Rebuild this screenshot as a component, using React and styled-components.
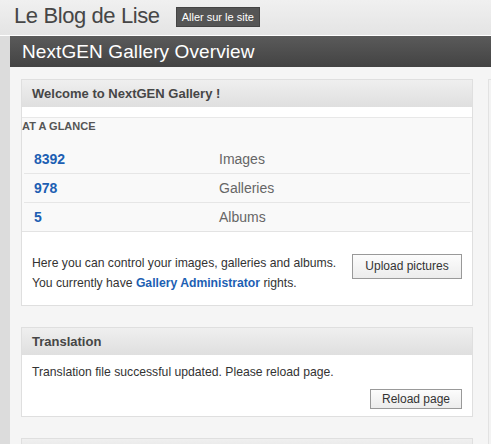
import React from "react"
import styled, { createGlobalStyle } from "styled-components"

const Global = createGlobalStyle`
  html, body {
    margin: 0;
    padding: 0;
    background: #f5f5f5;
    font-family: "Liberation Sans", Arial, sans-serif;
    color: #333;
  }
`

const Page = styled.div`
  width: 491px;
  height: 444px;
  overflow: hidden;
  display: flex;
  flex-direction: column;
`
const TopBar = styled.div`
  height: 35px;
  display: flex;
  align-items: center;
  padding-left: 14px;
  gap: 16px;
  background: linear-gradient(#f0f0f0, #e4e4e4);
  border-bottom: 1px solid #fff;
  flex-shrink: 0;
`
const SiteName = styled.div`
  font-size: 22px;
  color: #464646;
  letter-spacing: -0.4px;
  margin-top: -4px;
`
const SiteLink = styled.span`
  display: inline-block;
  background: #555;
  color: #fff;
  font-size: 11px;
  padding: 3px 5px;
  border: 1px solid #444;
  margin-top: -2px;
`
const Body = styled.div`
  flex: 1;
  display: flex;
`
const Strip = styled.div`
  width: 10px;
  background: #dcdcdc;
  flex-shrink: 0;
`
const Main = styled.div`
  flex: 1;
  display: flex;
  flex-direction: column;
`
const TitleBar = styled.div`
  height: 31px;
  display: flex;
  align-items: center;
  padding-left: 12px;
  background: linear-gradient(#5a5a5a, #434343);
  color: #fff;
  font-size: 19px;
  letter-spacing: 0.1px;
`
const Columns = styled.div`
  display: flex;
  gap: 15px;
  padding: 12px 0 0 11px;
`
const Col = styled.div`
  width: 452px;
  flex-shrink: 0;
  display: flex;
  flex-direction: column;
  gap: 21px;
`
const SideCol = styled.div`
  flex: 1;
  border: 1px solid #e2e2e2;
  border-right: none;
  background: #f3f3f3;
  height: 500px;
`
const Panel = styled.div`
  border: 1px solid #dfdfdf;
  background: #fff;
`
const PanelHead = styled.div`
  height: 27px;
  display: flex;
  align-items: center;
  padding-left: 10px;
  background: linear-gradient(#efefef, #dfdfdf);
  font-size: 13px;
  font-weight: bold;
  color: #464646;
`
const Glance = styled.div`
  margin-top: 10px;
  border-top: 1px solid #e8e8e8;
  border-bottom: 1px solid #e3e3e3;
  background: #f9f9f9;
`
const GlanceTitle = styled.div`
  font-size: 11px;
  font-weight: bold;
  color: #555;
  padding-top: 2px;
  height: 24px;
`
const StatRow = styled.div`
  display: flex;
  align-items: center;
  height: 28px;
  margin: 0 2px;
  border-top: ${({ first }) => (first ? "none" : "1px solid #e6e6e6")};
  margin-top: ${({ first }) => (first ? "1px" : "0")};
`
const Num = styled.a`
  width: 185px;
  padding-left: 10px;
  font-size: 14px;
  font-weight: bold;
  color: #1d5fb3;
`
const Label = styled.span`
  font-size: 14px;
  color: #666;
`
const Info = styled.div`
  display: flex;
  align-items: center;
  justify-content: space-between;
  padding: 21px 10px 12px 10px;
`
const Text = styled.div`
  font-size: 12.2px;
  line-height: 20px;
  color: #333;
`
const Strong = styled.a`
  color: #1d5fb3;
  font-weight: bold;
`
const Button = styled.button`
  font-family: "Liberation Sans", Arial, sans-serif;
  font-size: 12px;
  color: #333;
  height: ${({ h }) => h}px;
  width: ${({ w }) => w}px;
  padding: 0;
  border: 1px solid #999;
  border-radius: 0;
  background: linear-gradient(#fcfcfc, #ececec);
  margin-top: ${({ mt }) => mt || 0}px;
`
const TransBody = styled.div`
  padding: 7px 10px 7px 10px;
  display: flex;
  flex-direction: column;
`
const BtnRow = styled.div`
  display: flex;
  justify-content: flex-end;
  margin-top: 7px;
`

export default function App() {
  return (
    <Page>
      <Global />
      <TopBar>
        <SiteName>Le Blog de Lise</SiteName>
        <SiteLink>Aller sur le site</SiteLink>
      </TopBar>
      <Body>
        <Strip />
        <Main>
          <TitleBar>NextGEN Gallery Overview</TitleBar>
          <Columns>
            <Col>
              <Panel>
                <PanelHead>Welcome to NextGEN Gallery !</PanelHead>
                <Glance>
                  <GlanceTitle>AT A GLANCE</GlanceTitle>
                  <StatRow first>
                    <Num>8392</Num>
                    <Label>Images</Label>
                  </StatRow>
                  <StatRow>
                    <Num>978</Num>
                    <Label>Galleries</Label>
                  </StatRow>
                  <StatRow>
                    <Num>5</Num>
                    <Label>Albums</Label>
                  </StatRow>
                </Glance>
                <Info>
                  <Text>
                    Here you can control your images, galleries and albums.
                    <br />
                    You currently have <Strong>Gallery Administrator</Strong> rights.
                  </Text>
                  <Button w={110} h={25} mt={-14}>Upload pictures</Button>
                </Info>
              </Panel>
              <Panel>
                <PanelHead>Translation</PanelHead>
                <TransBody>
                  <Text>Translation file successful updated. Please reload page.</Text>
                  <BtnRow>
                    <Button w={92} h={20}>Reload page</Button>
                  </BtnRow>
                </TransBody>
              </Panel>
              <Panel>
                <PanelHead />
              </Panel>
            </Col>
            <SideCol />
          </Columns>
        </Main>
      </Body>
    </Page>
  )
}
